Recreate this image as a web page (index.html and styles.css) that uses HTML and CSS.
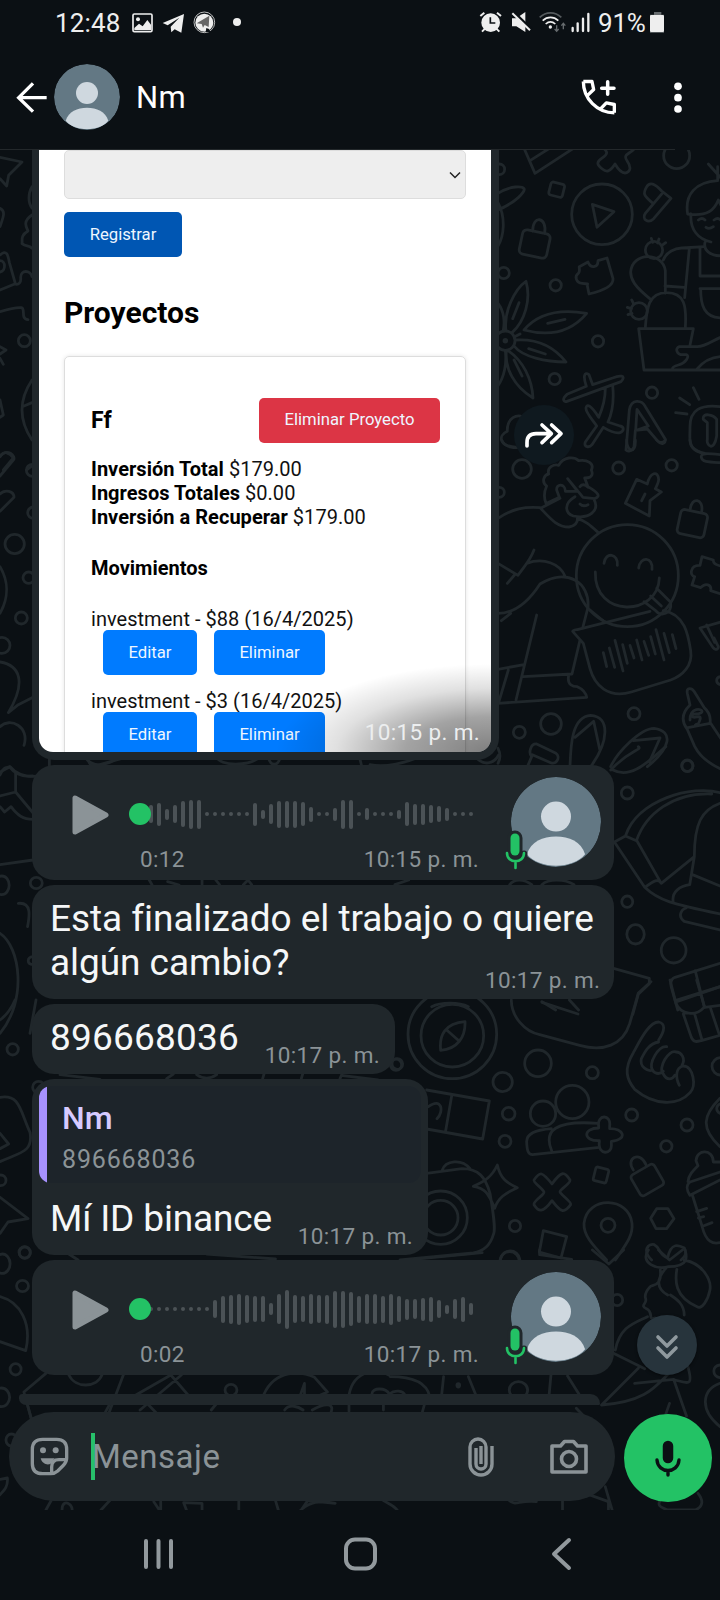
FILE: index.html
```html
<!DOCTYPE html>
<html lang="es">
<head>
<meta charset="utf-8">
<title>Nm</title>
<link rel="stylesheet" href="styles.css">
</head>
<body>
<svg class="defs" aria-hidden="true">
  <symbol id="avatar" viewBox="162 192 198 198">
    <clipPath id="round"><circle cx="261" cy="291" r="99"/></clipPath>
    <g clip-path="url(#round)">
      <circle cx="261" cy="291" r="99" fill="#637884"/>
      <circle cx="261" cy="279" r="33" fill="#cfd8df"/>
      <path d="M197 362C206 334 232 323 261 323s55 11 64 39c-14 17-38 25-64 25s-50-8-64-25z" fill="#cfd8df"/>
    </g>
  </symbol>
  <symbol id="badge-mic" viewBox="0 0 24 42">
    <path d="M11 9v15" stroke="#20272b" stroke-width="15" stroke-linecap="round"/>
    <path d="M3 25c0 11 17 11 17 0" fill="none" stroke="#20272b" stroke-width="7" stroke-linecap="round"/>
    <path d="M11 9v13" stroke="#23c265" stroke-width="9" stroke-linecap="round"/>
    <path d="M3 24c0 11 17 11 17 0M11.500 32v7" fill="none" stroke="#23c265" stroke-width="2.600" stroke-linecap="round"/>
  </symbol>
</svg>
<div class="phone">
  <div class="status">
    <span class="clock">12:48</span>
    <svg class="status-left" viewBox="390 0 345 144">
      <rect x="399" y="42" width="57" height="53" rx="4" fill="none" stroke="#eee" stroke-width="5"/>
      <circle cx="414" cy="58" r="6" fill="#eee"/>
      <path d="M403 84l14-13 11 8 14-19 11 14v16h-50z" fill="#eee"/>
      <path d="M488 69l64-27-8 56-20-10-10 9-2-17 26-27-35 23z" fill="#eee"/>
      <circle cx="613" cy="67" r="31" fill="none" stroke="#ddd" stroke-width="2.500"/>
      <circle cx="613" cy="68" r="27" fill="#eee"/>
      <path d="M590 70l38-23-2 34-12-6-5 8-4-11z" fill="#666"/>
      <path d="M619 84l-2 12h14l-4-9z" fill="#0b1014"/>
      <circle cx="711" cy="66" r="12" fill="#eee"/>
    </svg>
    <svg class="status-right" viewBox="354 0 342 144" fill="none" stroke="#eee">
      <circle cx="392" cy="68" r="28" fill="#eee" stroke="none"/>
      <path d="M361 48l12-10M423 48l-12-10M375 86l-9 9M409 86l9 9" stroke-width="6"/>
      <path d="M391 52v17h15" stroke="#0b1014" stroke-width="5"/>
      <path d="M456 55h13l27-19v60l-27-17h-13z" fill="#eee" stroke="none"/>
      <path d="M460 35l56 54" stroke="#0b1014" stroke-width="8"/>
      <path d="M457 40l53 51" stroke-width="6"/>
      <path d="M539 52c19-18 46-18 65 0" stroke="#555a5d" stroke-width="5"/>
      <path d="M548 62c14-13 33-13 47 0M557 72c9-8 20-8 29 0" stroke-width="5"/>
      <circle cx="571" cy="81" r="5" fill="#eee" stroke="none"/>
      <path d="M590 76v16M584 87l6 7 6-7M610 88v-17M604 77l6-7 6 7" stroke="#666b6e" stroke-width="4"/>
      <path d="M638 84v9M653 70v23M669 56v37M685 42v51" stroke-width="7" stroke-linecap="round"/>
    </svg>
    <span class="charge">91%</span>
    <svg class="battery" viewBox="864 0 60 144">
      <path d="M873 98h42v-54h-8v-8h-22v8h-12z" fill="#666b6e"/>
      <rect x="873" y="45" width="42" height="51" rx="4" fill="#eee"/>
    </svg>
  </div>
  <header class="header">
    <svg class="back" viewBox="45 240 99 105" fill="none" stroke="#fff" stroke-width="10">
      <path d="M140 293H56M99 250L56 293l43 42"/>
    </svg>
    <svg class="contact-photo"><use href="#avatar"/></svg>
    <h1 class="contact">Nm</h1>
    <svg class="call" viewBox="663 235 114 116" fill="none" stroke="#fff" stroke-width="10" stroke-linejoin="round">
      <path d="M673 245h26l5 24-20 19M766 339v-25l-24-5-18 19M673 245c0 52 42 94 93 94"/>
      <path d="M746 246v37M728 265h37" stroke-width="10.500" stroke-linecap="round"/>
    </svg>
    <svg class="more" viewBox="940 240 30 105" fill="#fff"><circle cx="955" cy="259" r="11.500"/><circle cx="955" cy="293" r="11.500"/><circle cx="955" cy="327" r="11.500"/></svg>
  </header>

  <main class="chat">
    <svg class="doodles" viewBox="0 150 720 1360" aria-hidden="true">
      <g transform="translate(490 140) scale(.33333)">
        <path d="M100 20l35 80L255 22M120 62l60-38M335 20c20 15 20 22 0 35s-10 22 2 32 22 10 38-15c15 25 25 30 35 26s15-15 2-34 0-20 18-34"/>
        <circle cx="560" cy="47" r="39"/><circle cx="336" cy="223" r="91"/><path d="M307 193l65 22-51 47z"/>
        <rect x="179" y="129" width="42" height="40" rx="7" transform="rotate(14 200 149)"/>
        <path d="M24 160c40-24 72-22 78-14s-26 42-78 64M24 188c24 45 18 100 0 130"/>
        <rect x="92" y="275" width="84" height="74" rx="13" transform="rotate(12 134 312)"/><path d="M128 273c0-50 44-42 36 6"/>
        <path d="M489 190c-30-25-30-30-20-48s26-11 46 11l28 22-52 61c-18 17-36 0-25-16l50-59"/>
        <path d="M655 72l38 42M683 80v42c-65 4-100 40-90 100 60 8 80-12 92-42l8 16M603 222c-4 45 20 75 60 84M625 240c8-6 14-6 20 0M672 240c8-6 14-6 20 0M648 262c8 6 14 4 22-2M645 307c-6 25 20 42 48 40"/>
        <circle cx="492" cy="330" r="26"/><path d="M484 295l4 12M507 297l-4 12M527 308l-11 8M482 478c-50-40-60-60-60-82 4-60 96-62 104-4v68M466 563c4-60 10-105 64-105s60 40 56 105M520 360c10-25 35-35 55-36l68-4M598 325l-14 148M525 438l57 4M630 322v86h62M630 446h62M632 446c0 50 10 85 60 88"/>
        <circle cx="447" cy="513" r="25"/><path d="M425 480l6 12M412 502l12 4M414 524l12-4M692 690H462L446 566h164l-10 50M692 592c-25 10-45 28-70 28h-54c-14 4-8 24 10 24h12c10 5-4 26-25 31-12 3-18 6-18 12M692 650c-35 2-55 18-72 38"/>
        <circle cx="41" cy="399" r="17"/><circle cx="197" cy="436" r="17"/><circle cx="324" cy="604" r="17"/><circle cx="194" cy="717" r="17"/><circle cx="486" cy="758" r="17"/><circle cx="28" cy="88" r="16"/>
        <path d="M265 400c-12 8-8 28 12 30l16 2-2 0 6 30c35-8 74-22 72-46l-18-62-27 8c0 22-22 24-30 4l-26 14c-2 0 4 12-3 20"/>
        <circle cx="46" cy="602" r="29"/><circle cx="46" cy="602" r="4"/>
        <path d="M48 572c-8-55 26-125 60-148 16 55-4 120-42 154M102 570c50-60 130-60 188-50-50 60-120 68-188 50zM76 600c70-5 120 25 152 66-60 0-130-15-156-48M54 632c45 30 72 85 75 142-58-35-85-90-80-142M24 490c20 25 20 60 16 80M46 632c5 40-4 80-22 105M68 536l19-48M173 550l52-12M116 626l50 16M72 660l24 48M74 590l16-8"/>
        <path d="M231 784l162-59c18-20-4-20-25-11l-60 20-11-30c-15-10-18 6-8 35l-58 24c-18 16-8 24 0 21M346 744c0 40-12 70-20 88-22-36-36-42-38-28s24 40 32 54l-34 48c-6 16 12 18 20 8l34-52c20 12 40 18 50 16 14-6 12-18 0-20l-36-12c14-30 18-70 14-110M408 930l10-120c6-35 38-30 48-10l60 98c0 16-14 16-24 4l-30-35-36 4-4 50c-6 14-20 14-24 9M437 872l4-64 34 50zM692 800c-60-8-92 10-92 60s-8 60 34 78M610 743l17 35M569 774l30 20M557 818l34 4M640 838c-4-22 30-14 40 0v50c-8 50-32 28-28 10v-50z"/>
        <path d="M110 838c-30-25-60 0-58 36-30 14-24 46 30 48"/>
      </g>
      <g transform="translate(490 440) scale(.33333)">
        <circle cx="96" cy="87" r="28"/><circle cx="386" cy="84" r="18"/><circle cx="545" cy="76" r="17"/><circle cx="28" cy="157" r="15"/>
        <path d="M35 0c10 25 45 25 60 20M410 0c0 35 28 45 26 0M600 0c4 30 20 36 45 40M500 0c8 10 18 10 26 0M692 44c-40-4-60-6-58 8s20 14 58 16"/>
        <path d="M168 190c-8-20-6-35 2-52-18-14-6-34 6-36-6-22 18-30 30-26 14-28 48-26 60-14 26-4 48 8 38 28 10 24-12 24-20 24l10 26c30 18 40 28 20 36l-35-4-46-56 30 38H226c0-24-28-24-26-4l8 22-38 18M255 170c-35 20-30 50-5 58 48 10 80-16 62-50M270 140c6-8 14-8 24 2M270 192c8 8 16 6 24 2M210 175l-58 30c32 34 50 56 85 56 22-4 26-15 26-28M24 235c45-30 80-35 126-32M262 235c25 8 40 22 62 42"/>
        <path d="M406 190l34-72 32 14c8-35 32-42 34-14 0 10-6 20-10 28l18 10-34 26-2 46-72-38zM455 182l10-20"/>
        <rect x="566" y="214" width="82" height="74" rx="12" transform="rotate(12 607 251)"/><path d="M600 210c4-42 42-34 35 5M692 378c-25-5-22-16-22-18l-34-10-6 26c-30-2-32 32-16 34l-8 25 26 8c14-16 34-10 30 9l28 9"/>
        <circle cx="412" cy="407" r="153"/><path d="M342 370c4-36 44-30 40 6M446 384c4-36 44-34 40 4M316 396c-4 140 188 134 192 18M500 445l42 42c4 35-30 45-46 24l-34-26M482 468l32 30M300 510l44 36"/>
        <path d="M520 512c65 10 75 75 82 120s-25 75-60 88l-118 36c-70 20-110-20-124-70l-20-76-32-36c2-3 10-6 14-5l218-55M340 638l10 42M358 624l16 58M375 601l24 92M398 614l14 56M420 616l12 38M440 600l16 60M462 604l14 42M482 590l14 52M498 569l24 91M522 580l16 58M547 584l11 42"/>
        <path d="M24 370l60 36c20-30 34-40 48-76M52 430l24-28M110 370c50-18 100 0 116 40M24 520c55 0 95-40 126-88 80-50 150-5 144 70l-16 62M34 542l28-22M140 525L78 780M270 600l-24 102-146 8M236 706c-6 30 14 34 26 34 18 8 26 20 28 32L24 790M24 688l78-14M55 690l-28 94"/>
        <path d="M692 546l-62 18 40 60c8 10 20 0 12-10l-10-20M650 555l24 52M692 710c-16 2-16 20 0 24"/>
        <circle cx="183" cy="852" r="31"/><circle cx="88" cy="877" r="18"/><circle cx="432" cy="821" r="18"/><circle cx="592" cy="977" r="17"/>
        <path d="M240 980c2-60 4-150 62-154 60 4 54 80 0 154M255 892l56-48 18 84M362 980c20-44 90-115 130-115 60 8 50 60-20 115M430 902l80-8-32 72M110 985l15-35c-10-10-4-40 15-38l58 28c14 10 2 36-16 28l-55-24M24 925c8 16 8 30 0 45"/>
        <path d="M590 865c-14-20-16-45 10-70l-8-35c-4-20 14-16 20-6l30 48c18 16 20 36 18 48l-70 14 24 55c15 30 40 50 78 68M662 850l30 45M600 840c0-40 38-35 36-25s-36 4-30 14 30-10 24 10-6 10-14 16"/>
      </g>
      <g transform="translate(400 980) scale(.33333)">
        <circle cx="157" cy="163" r="133"/><circle cx="157" cy="167" r="94"/><path d="M195 125c-60 5-78 40-73 86 50-4 75-40 73-86zM140 150l34 30M426 67l108 35M334 60c0 50 40 95 85 104l120 32c70 20 130 0 150-65l26-92 38-34M810 0l18 70c15 35 60 40 84 12M828 66l132-46M890 0l24 82 46-6M850 102l24 70c8 18 20 12 30 10l56-16M884 102l22 78M932 86l26 78"/>
        <path d="M776 180c20-30 20-50 0-54-30 0-58 60-76 92-30 50-20 80 4 110 60 50 130 50 166 10 20-20 10-80-20-80-24 5-24 35-12 58M776 186c-30 5-42 30-52 50-6 25 20 40 34 34M800 200c-24-4-56 50-42 72 10 12 24 10 32 2M828 216c-22-10-56 50-38 66 10 20 26 18 34 4M846 256c12-20-2-40-18-40"/>
        <circle cx="414" cy="250" r="40"/><circle cx="308" cy="306" r="29"/><circle cx="577" cy="278" r="18"/><circle cx="517" cy="366" r="50"/><circle cx="429" cy="401" r="38"/><circle cx="326" cy="401" r="19"/><circle cx="315" cy="484" r="18"/><circle cx="695" cy="405" r="18"/><circle cx="861" cy="435" r="18"/><circle cx="799" cy="499" r="17"/><circle cx="962" cy="259" r="26"/><circle cx="-8" cy="252" r="16"/>
        <path d="M80 330l188 33-20 114-168-30M155 348l-18 104M85 380c40-30 48 14 26 36M454 446c-50 4-75 15-74 40s4 38 18 38l200-22M455 512c-25-60 10-92 140-82"/>
        <path d="M596 438c-6-34 38-38 33 0v8c40-2 58 32 5 38v8c4 34-42 34-36-6v-4c-50 2-50-38-2-38zM960 355c-50 50-60 90 0 145M960 372c-12 6-14 20 0 28"/>
        <path d="M292 555c10 44 30 54 60 68-35 16-58 30-68 62-20-48-30-60-64-66 36-15 56-30 72-64zM80 580l106-14c50 0 70 25 84 74 10 60 18 110 10 124-10 35-30 50-60 55L0 840M126 572c10-32 60-36 84-6"/><circle cx="122" cy="713" r="80"/><circle cx="122" cy="713" r="52"/>
        <path d="M402 600c18-26 24-26 54 12 28-40 38-38 54-12 4 10-34 30-30 36 4 10 36 30 32 38-20 28-30 22-56-12-28 38-40 34-54 12-4-10 32-30 30-38s-34-30-30-36z"/>
        <rect x="583" y="564" width="40" height="42" rx="6" transform="rotate(14 603 585)"/><rect x="702" y="564" width="80" height="72" rx="10" transform="rotate(-30 742 600)"/><path d="M700 570c-25-34 20-60 38-16M770 686h34l18 30-22 30h-32l-16-31zM430 752l70 18-17 64-65-18zM620 840c-45-48-70-75-68-110 10-85 136-80 144 0 4 38-20 66-50 110"/>
        <circle cx="624" cy="736" r="21"/><circle cx="345" cy="738" r="17"/><circle cx="329" cy="844" r="29"/>
        <path d="M960 600l-90 46c-14-20-8-34 0-40l90-30M960 546h-20c0-40-50-40-52-4l6 15c-16 16-28 28-30 48M878 648l28 90c12 50 34 55 54 50M890 695l30-10M895 714l16-4M910 738l26-10M755 840c-30-30-10-50 8-46 20 10 12 30 40 40 10-50 35-38 50-30 6 14 6 24-10 36"/>
      </g>
      <g transform="translate(0 140) scale(.33333)">
        <path d="M0 52l66 14-40 40-6 32-20-22M96 140c-12 20-12 50 0 64M0 205c18 8 10 26 0 55M96 225c-30 20-16 38-12 48-24 14-16 28-18 38 12 10 20 4 30 14M0 345c20-18 24 0 28 22l18 64M0 450l44-18c12 4 20-4 18-20 0-24 30-22 34-2M0 515c20-6 50-14 64-12s-4 34 20 36M0 362c18 0 18 32 0 34M0 620l18 10-18 12M0 655l10 18M96 720c-40 60-40 120 0 180M72 798l24-10M0 780l10 45L0 832M0 950c10-20 30-12 40 4l-30 36M80 990l16-12"/><circle cx="73" cy="602" r="18"/>
      </g>
      <g transform="translate(0 450) scale(.33333)">
        <path d="M0 20c20-30 50 0 40 10L0 78M0 132c16-16 42-8 42 10L0 184M0 350c24 40 28 90 0 140M0 636c60 10 80 60 25 152l30-24 50-25M0 830c30-30 90 0 72 56M0 975c14-30 20-20 28-25 18 24 38 32 70 28"/><circle cx="44" cy="282" r="29"/><circle cx="97" cy="61" r="18"/><circle cx="100" cy="188" r="17"/><circle cx="86" cy="383" r="17"/><circle cx="64" cy="504" r="18"/><circle cx="6" cy="586" r="24"/>
        <path d="M148 900v50M265 930c4 20 18 20 40 12l80-22M650 920c8 30 100 30 130 0M805 920c5 30 30 30 36 0M1080 928l5 20M1110 944c50 10 110-8 140-20M1430 925c20 20 50 20 66-10"/>
      </g>
      <g transform="translate(0 750) scale(.4592 .33333)">
        <path d="M0 66l22-16c15 26 40 32 65 28M34 66v60L0 138M34 126l40 66M0 170l10 16 14-16c14 26 26 38 48 38M0 344l72-14M0 550c44 40 60 200 0 300M40 460c30-4 24 40 20 70M72 620c-14 2-14 22 0 24M1330 60c40-60 70-60 60-70M1335 60c40 30 80-30 115-70"/>
        <ellipse cx="1366" cy="129" rx="13" ry="18"/><ellipse cx="1497" cy="48" rx="12" ry="17"/><ellipse cx="1366" cy="455" rx="12" ry="17"/><ellipse cx="1384" cy="553" rx="19" ry="29"/><ellipse cx="1467" cy="601" rx="27" ry="38"/><ellipse cx="79" cy="399" rx="13" ry="17"/><ellipse cx="4" cy="406" rx="16" ry="28"/>
        <path d="M1568 128c-60-24-180 20-206 130l-24 18 66 136c20-20 30-28 36-12M1362 258l24 14c20-80 80-145 164-140M1386 270l54 130 72-80M1568 160c-40 20-56 60-56 160l-10 84c-20 4-40 20-36 52M1404 412c30 40 60 50 164 80M1508 374l60 34M1568 540l-78-26c-14-14-8-34 4-40M1336 655l78 30v16l-24 32-12 60M1568 640l-98 42c-10 6-10 20-8 30l14 68M1470 752l98-42M1514 662l20 110"/>
        <path d="M190 30c20 24 40 14 60 0M325 390l6 14M440 390v14M365 395l25 10M470 390l8 14M530 404l10-14 8 14M860 404l30-14M1110 404c10-18 30-18 48 0M1180 404c14-18 50-18 70 0M1180 755l30 25M940 770c20-14 60-14 80 0M1240 750l20 30"/>
      </g>
      <g transform="translate(0 1000) scale(.33333)">
        <path d="M45 0c-10 24-25 45-45 60M108 0L90 100M0 292c60-10 60 40 90 105 10 60-30 60-90 88M0 400l26 32-26 14M0 592l84 64-60 10L0 700"/><circle cx="38" cy="148" r="17"/><circle cx="2" cy="541" r="16"/><circle cx="74" cy="757" r="17"/><circle cx="116" cy="262" r="18"/><circle cx="1188" cy="194" r="17"/>
        <path d="M180 224l120 14M500 236l20-14M590 224c20 14 40 14 60 0M788 236l4-14M904 236l4-14M1020 236l6-14M1024 226l110 14"/>
      </g>
      <g transform="translate(0 1250) scale(.4592 .33333)">
        <ellipse cx="54" cy="8" rx="12" ry="17"/><ellipse cx="5" cy="41" rx="17" ry="29"/><ellipse cx="49" cy="108" rx="13" ry="17"/><ellipse cx="34" cy="358" rx="12" ry="17"/><ellipse cx="3" cy="442" rx="18" ry="28"/><ellipse cx="503" cy="420" rx="13" ry="17"/><ellipse cx="1344" cy="150" rx="12" ry="17"/><ellipse cx="1129" cy="420" rx="20" ry="25"/><ellipse cx="25" cy="570" rx="12" ry="18"/><ellipse cx="998" cy="406" rx="3" ry="5"/>
        <path d="M0 140c44 16 70 80 56 162L0 275M100 370l-48 56 16 80M150 375c14 40 60 40 72 0M270 370l-32 116M372 375l-76 60M395 375l-90 105M372 375l50 80M575 432c25-74 80-70 110-50l28 44-20 12M655 432l8-32v32M760 435c10-80 70-80 86-60M850 380c50 0 80 20 86 60M810 432c0-20 30-20 38 0 12-14 30-10 34 4M962 432l4-52M1020 380l16 54M1200 372l-4 60M1236 378l25 55M150 12l20 18M450 12l150 15M900 28l150-20M1090 28c5-34 38-34 42 0M1175 0v14l70 14M1290 0l36 42L1358 0"/>
        <path d="M1412 0c-20 40 20 60 44 50 45 0 40-30 36-50M1434 0l24 30 28-30M1438 60c4 50-18 44-22 50s-14 20-10 36-14 20 2 30 2 36 18 28M1490 30c40 10 60 60 56 90-4 30-18 60-28 50-50-30-48-80-44-112M1450 55c-20 30-22 60 4 80M1460 135c16 14 30 30 30 60M1340 300c10-70 40-80 70-100M1336 310l68 46M1390 355l-80 110c100-10 120-60 150-100M1382 400l85-12 28 110M1470 390c30 10 40 20 28-40M1568 345c-18 2-18 34 0 38M1568 400c-40 20-45 80 0 130M1458 460l-15 60M1255 475c34 50 60 80 75 105M1318 710l15 70M1275 730l50 25v25M1225 750v30M1108 750c15 20 20 0 60 5M1520 730c12 20 12 40-6 50h-60c-20-10-22-16-16-30M0 688l16-4c2 25-6 36-16 50"/>
        <path d="M100 780l12-30M135 780c0-40 30-16 20 10M220 780l20-30M335 755l12 25M350 780v-25M440 780v-20l-40-2 6 22M520 752v28M600 752l6 28M655 780c20-25 40-30 75-20l-60-8-14 28M865 780c-8-14-20-20-30-28M460 480l18-30 36 10M620 480c10-20 30-10 40 0M680 480c30-24 50-20 40 10M760 484v-20M835 480v-20M920 485l4-20M60 465l8 40M238 465l-10 25M320 460l20 28"/>
      </g>
    </svg>

    <article class="bubble shot">
      <div class="photo">
        <div class="select"><svg viewBox="0 0 12 8"><path d="M1 1.500l5 5 5-5" fill="none" stroke="#222" stroke-width="1.500"/></svg></div>
        <span class="btn dark">Registrar</span>
        <h2 class="section">Proyectos</h2>
        <div class="card">
          <div class="card-head"><h3>Ff</h3><span class="btn red">Eliminar Proyecto</span></div>
          <p><b>Inversión Total</b> $179.00</p>
          <p><b>Ingresos Totales</b> $0.00</p>
          <p><b>Inversión a Recuperar</b> $179.00</p>
          <h4>Movimientos</h4>
          <p class="move">investment - $88 (16/4/2025)</p>
          <div class="actions"><span class="btn">Editar</span><span class="btn">Eliminar</span></div>
          <p class="move">investment - $3 (16/4/2025)</p>
          <div class="actions"><span class="btn">Editar</span><span class="btn">Eliminar</span></div>
        </div>
        <span class="time on-photo">10:15 p. m.</span>
      </div>
    </article>
    <span class="forward"><svg viewBox="73 795 180 180" fill="none" stroke="#fff" stroke-width="11" stroke-linecap="round" stroke-linejoin="round"><path d="M112 918v-10q0-27 27-27h42M157 855l28 26-28 27M186 855l28 26-28 27"/></svg></span>

    <article class="bubble voice">
      <svg class="play" viewBox="0 0 38 42"><path d="M4 4v34l31-17z" fill="#8b9397" stroke="#8b9397" stroke-width="5" stroke-linejoin="round"/></svg>
      <div class="track">
        <div class="wave" data-levels="18 23 11 18 26 29 29 4 4 4 4 4 4 23 9 20 27 27 27 24 15 4 4 13 29 29 4 12 4 4 4 9 24 21 21 18 16 13 4 4 4"></div>
        <div class="meta"><span>0:12</span><span class="time">10:15 p. m.</span></div>
      </div>
      <div class="speaker"><svg class="face"><use href="#avatar"/></svg><svg class="badge"><use href="#badge-mic"/></svg></div>
    </article>

    <article class="bubble text wide">
      <p>Esta finalizado el trabajo o quiere<br>algún cambio?</p><span class="time">10:17 p. m.</span>
    </article>

    <article class="bubble text number"><p>896668036</p><span class="time">10:17 p. m.</span></article>

    <article class="bubble reply">
      <blockquote class="quote"><strong>Nm</strong><span>896668036</span></blockquote>
      <div class="text"><p>Mí ID binance</p><span class="time">10:17 p. m.</span></div>
    </article>

    <article class="bubble voice">
      <svg class="play" viewBox="0 0 38 42"><path d="M4 4v34l31-17z" fill="#8b9397" stroke="#8b9397" stroke-width="5" stroke-linejoin="round"/></svg>
      <div class="track">
        <div class="wave" data-levels="4 4 4 4 4 4 4 4 18 27 29 31 28 26 26 12 30 39 28 26 30 28 29 37 37 34 27 30 30 27 31 26 21 20 23 25 18 9 20 25 12"></div>
        <div class="meta"><span>0:02</span><span class="time">10:17 p. m.</span></div>
      </div>
      <div class="speaker"><svg class="face"><use href="#avatar"/></svg><svg class="badge"><use href="#badge-mic"/></svg></div>
    </article>
    <div class="next-bubble"></div>
    <span class="jump"><svg viewBox="0 0 60 60" fill="none" stroke="#8f999e" stroke-width="3.600" stroke-linecap="round" stroke-linejoin="round"><path d="M21 22l9 9 9-9M21 33l9 9 9-9"/></svg></span>

    <form class="composer">
      <div class="field">
        <svg class="sticker" viewBox="90 114 117 117" fill="none" stroke="#8b9397" stroke-width="10" stroke-linejoin="round">
          <path d="M128 121h42q30 0 30 30v26q0 12-9 21l-18 18q-9 8-21 8h-24q-31 0-31-30v-43q0-30 31-30zM155 223v-19q0-22 22-22h22"/>
          <circle cx="129" cy="154" r="9" fill="#8b9397" stroke="none"/><circle cx="167" cy="154" r="9" fill="#8b9397" stroke="none"/>
          <path d="M122 178h42l-13 17c-12 4-25-2-29-17z" fill="#8b9397" stroke="none"/>
        </svg>
        <span class="placeholder">Mensaje</span>
        <svg class="clip" viewBox="0 0 28 40" fill="none" stroke="#8b9397" stroke-width="3.400" stroke-linecap="butt"><path d="M25 9v18a11 11 0 0 1-22 0V10a8 8 0 0 1 16 0v17a5 5 0 0 1-10 0V11M14 9v18"/></svg>
        <svg class="camera" viewBox="0 0 40 36" fill="none" stroke="#8b9397" stroke-width="3.600" stroke-linejoin="round"><path d="M3 7h8.500l4-4.500h9L28.500 7H37v26H3z"/><circle cx="20" cy="20" r="7.500"/></svg>
      </div>
      <span class="record"><svg viewBox="0 0 30 40" fill="none" stroke="#0b1014" stroke-linecap="round"><path d="M15 8v12" stroke-width="10.500"/><path d="M4 22c1 14 21 14 22 0M15 33v4" stroke-width="3.400"/></svg></span>
    </form>
  </main>

  <nav class="nav">
    <svg viewBox="0 0 30 34"><path d="M3 4v26M15.500 4v26M28 4v26" /></svg>
    <svg viewBox="0 0 34 34"><rect x="2" y="2.500" width="29" height="29" rx="9"/></svg>
    <svg viewBox="0 0 22 34"><path d="M19 3L4 17l15 14"/></svg>
  </nav>
</div>
<script src="app.js"></script>
</body>
</html>
```
FILE: styles.css
```css
* { box-sizing: border-box; }
body { margin: 0; background: #0b1014; font-family: Roboto, sans-serif; color: #f5f7f8; }
h1, h2, h3, h4, p, blockquote { margin: 0; }
svg { display: block; flex: none; }
.defs { position: absolute; width: 0; height: 0; }
.phone { width: 720px; height: 1600px; display: flex; flex-direction: column; overflow: hidden; }

.status { height: 48px; display: flex; align-items: flex-start; padding-left: 55px; color: #eee; font-size: 26px; line-height: 46px; }
.clock { width: 75px; letter-spacing: .15px; }
.status-left { width: 115px; height: 48px; }
.status-right { width: 114px; height: 48px; margin-left: 233px; }
.charge { width: 49px; margin-left: 6px; letter-spacing: -.2px; }
.battery { width: 20px; height: 48px; }

.header { height: 102px; display: flex; align-items: center; padding: 0 37px 4px 15px; background: linear-gradient(#23282b, #23282b) left bottom / 675px 1px no-repeat; }
.back { width: 33px; height: 35px; }
.contact-photo { width: 66px; height: 66px; margin-left: 6px; }
.contact { flex: 1; margin-left: 16px; padding-top: 2px; font-size: 31px; font-weight: 400; line-height: 40px; letter-spacing: .4px; color: #fff; }
.call { width: 38px; height: 39px; }
.more { width: 10px; height: 35px; margin-left: 55px; }

.chat { position: relative; height: 1360px; flex: none; overflow: hidden; display: flex; flex-direction: column; align-items: flex-start; }
.doodles { position: absolute; inset: 0; width: 720px; height: 1360px; fill: none; stroke: #20272b; stroke-width: 2.8px; stroke-linecap: round; stroke-linejoin: round; }
.doodles * { vector-effect: non-scaling-stroke; }
.bubble { position: relative; margin: 0 0 5px 32px; background: #20272b; border-radius: 22px; flex: none; }
.time { font-size: 22.500px; line-height: 28px; letter-spacing: .35px; color: #8b9397; white-space: nowrap; }

.shot { width: 467px; height: 610px; padding: 0 8px 8px 7px; border-radius: 0 0 22px 22px; }
.photo { position: relative; height: 602px; padding: 0 25px; overflow: hidden; background: #fff; border-radius: 0 0 14px 14px; color: #111; font-size: 20px; line-height: 24px; }
.photo::after { content: ""; position: absolute; inset: 0; background: radial-gradient(ellipse 215px 88px at 100% 100%, rgba(0,0,0,.5), rgba(0,0,0,.36) 40%, rgba(0,0,0,.12) 72%, transparent); }
.select { height: 49px; display: flex; align-items: center; justify-content: flex-end; padding-right: 4px; background: #eee; border: 1px solid #ddd; border-radius: 5px; }
.select svg { width: 12px; height: 8px; }
.btn { display: inline-flex; align-items: center; justify-content: center; height: 45px; border-radius: 5px; background: #007bff; color: #eef6ff; font-size: 16.7px; line-height: 20px; }
.btn.dark { display: flex; width: 118px; margin-top: 13px; background: #0056b3; }
.btn.red { width: 181px; background: #dc3545; }
.section { margin-top: 38px; font-size: 30px; line-height: 36px; color: #000; }
.card { margin-top: 25px; height: 440px; padding: 40px 25px 0; border: 1px solid #ddd; border-radius: 5px; box-shadow: 0 0 4px rgba(0,0,0,.1); }
.card-head { display: flex; justify-content: space-between; align-items: center; height: 46px; margin-bottom: 14px; }
.card h3 { padding: 2px 0 0 1px; font-size: 23px; color: #000; }
.card b { color: #000; }
.card h4 { margin: 27px 0; padding-left: 1px; font-size: 20px; line-height: 24px; color: #000; }
.card p { padding-left: 1px; white-space: nowrap; letter-spacing: .03px; }
.actions { display: flex; gap: 17px; margin: -1px 0 14px 13px; }
.actions .btn { width: 94px; }
.actions .btn + .btn { width: 111px; }
.on-photo { position: absolute; right: 11px; bottom: 6px; z-index: 1; color: #eceeef; }

.forward { position: absolute; left: 514px; top: 255px; width: 60px; height: 60px; border-radius: 50%; background: #0f191f; }
.forward svg { width: 60px; height: 60px; }

.voice { display: flex; width: 582px; height: 115px; padding: 0 13px 0 39px; }
.play { width: 38px; height: 42px; margin-top: 29px; }
.track { width: 349px; margin-left: 20px; }
.wave { display: flex; align-items: center; gap: 4px; height: 40px; margin: 29px 0 0 20px; position: relative; }
.wave::before { content: ""; position: absolute; left: -20px; top: 9px; width: 22px; height: 22px; border-radius: 50%; background: #23c265; z-index: 1; }
.wave i { width: 4px; flex: none; border-radius: 2px; background: #4b5256; }
.meta { display: flex; justify-content: space-between; margin: 11px -1px 0 0; padding-left: 11px; font-size: 22.500px; line-height: 28px; letter-spacing: .3px; color: #8b9397; }
.speaker { position: relative; width: 90px; height: 90px; margin: 12px 0 0 auto; }
.face { width: 90px; height: 90px; }
.badge { position: absolute; left: -7px; top: 52px; width: 24px; height: 42px; }

.text { display: flex; align-items: flex-end; justify-content: space-between; padding: 0 15px 5px 18px; font-size: 37px; line-height: 44px; }
.text p { white-space: nowrap; align-self: flex-start; }
.text.wide { width: 582px; height: 114px; padding: 12px 16px 5px 18px; }
.text.wide p { width: 435px; letter-spacing: -.05px; }
.text.number { width: 363px; height: 70px; padding-top: 12px; }
.text.number p { letter-spacing: .2px; }
.reply { width: 396px; height: 176px; padding: 7px 7px 0; }
.quote { height: 97px; padding: 12px 0 0 23px; border-radius: 12px; background: linear-gradient(90deg, #a791ff 8px, #1d242a 8px); display: flex; flex-direction: column; }
.quote strong { font-size: 32px; font-weight: 500; line-height: 40px; color: #d6caff; }
.quote span { font-size: 25px; line-height: 34px; letter-spacing: .85px; margin-top: 5px; color: #8b9397; }
.reply .text { height: 72px; padding: 14px 8px 5px 11px; }
.reply .text p { letter-spacing: -.15px; }
.next-bubble { width: 581px; height: 11px; margin: 14px 0 7px 19px; border-radius: 5px 14px 2px 10px; background: #20272b; flex: none; position: relative; }

.jump { position: absolute; left: 637px; top: 1165px; width: 60px; height: 60px; border-radius: 50%; background: #27343c; box-shadow: 0 1px 3px #0008; }
.jump svg { width: 60px; height: 60px; }

.composer { position: relative; display: flex; align-items: center; gap: 9px; height: 89px; margin-left: 9px; }
.field { display: flex; align-items: center; width: 606px; height: 89px; padding: 0 26px 0 21px; border-radius: 45px; background: #20272b; }
.sticker { width: 39px; height: 39px; }
.placeholder { flex: 1; margin-left: 22px; border-left: 4px solid #27c06a; font-size: 33px; line-height: 46px; color: #8b9397; text-indent: -3px; letter-spacing: .5px; padding-top: 1px; }
.clip { width: 28px; height: 40px; margin-right: 54px; }
.camera { width: 40px; height: 36px; }
.record { display: grid; place-items: center; width: 88px; height: 88px; margin-top: 2px; border-radius: 50%; background: #23c265; }
.record svg { width: 30px; height: 40px; }

.nav { height: 90px; display: flex; align-items: center; padding: 0 148px 2px 143px; justify-content: space-between; }
.nav svg { height: 34px; fill: none; stroke: #92999d; stroke-width: 4px; stroke-linecap: round; stroke-linejoin: round; overflow: visible; }
.nav svg:nth-child(1) { width: 30px; }
.nav svg:nth-child(2) { width: 34px; margin-left: -2px; }
.nav svg:nth-child(3) { width: 22px; }
```
FILE: app.js
```js
// Build one waveform bar per level in each voice message.
for (const wave of document.querySelectorAll('.wave')) {
  for (const level of wave.dataset.levels.split(' ')) {
    const bar = document.createElement('i');
    bar.style.height = level + 'px';
    wave.append(bar);
  }
}
```
